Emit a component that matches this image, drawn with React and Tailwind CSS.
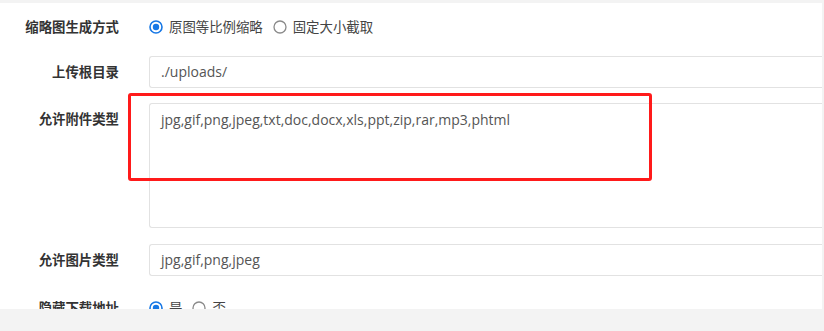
import React from "react";

const font = { fontFamily: '"Open Sans", "Noto Sans CJK SC", sans-serif' };

function Radio({ checked, label }) {
  return (
    <span className="flex items-center">
      {checked ? (
        <svg width="14" height="14" viewBox="0 0 14 14" className="mr-[6px]">
          <circle cx="7" cy="7" r="6" fill="none" stroke="#1677e5" strokeWidth="1.6" />
          <circle cx="7" cy="7" r="3.2" fill="#1677e5" />
        </svg>
      ) : (
        <svg width="14" height="14" viewBox="0 0 14 14" className="mr-[6px]">
          <circle cx="7" cy="7" r="6" fill="#fff" stroke="#8a8a8a" strokeWidth="1.3" />
        </svg>
      )}
      <span className="text-[13.4px] text-[#444] mr-[10px]">{label}</span>
    </span>
  );
}

function Label({ children, className = "" }) {
  return (
    <div className={"w-[120px] shrink-0 pr-[1px] text-right text-[13.4px] font-bold text-[#333] leading-[32px] " + className}>
      {children}
    </div>
  );
}

export default function App() {
  return (
    <div className="w-[824px] h-[331px] bg-[#f3f3f3] pt-[3px] overflow-hidden" style={font}>
      <div className="relative w-[822px] h-[306px] bg-white overflow-hidden">
        <div className="pt-[8px] pl-0">
          <div className="flex h-[32px] items-center">
            <Label>缩略图生成方式</Label>
            <div className="flex items-center pl-[29px]">
              <Radio checked label="原图等比例缩略" />
              <Radio label="固定大小截取" />
            </div>
          </div>

          <div className="flex mt-[13px]">
            <Label>上传根目录</Label>
            <div className="ml-[29px] flex-1 h-[32px] border border-r-0 border-[#e2e2e2] rounded-l-[3px] pl-[11px] text-[14px] text-[#555] leading-[30px]">
              ./uploads/
            </div>
          </div>

          <div className="flex mt-[15px]">
            <Label>允许附件类型</Label>
            <div className="ml-[29px] flex-1 h-[125px] border border-r-0 border-[#e2e2e2] rounded-l-[3px] pl-[11px] pt-[6px] text-[14px] text-[#555] leading-[20px]">
              jpg,gif,png,jpeg,txt,doc,docx,xls,ppt,zip,rar,mp3,phtml
            </div>
          </div>

          <div className="flex mt-[16px]">
            <Label>允许图片类型</Label>
            <div className="ml-[29px] flex-1 h-[32px] border border-r-0 border-[#e2e2e2] rounded-l-[3px] pl-[11px] text-[14px] text-[#555] leading-[30px]">
              jpg,gif,png,jpeg
            </div>
          </div>

          <div className="flex h-[32px] items-center mt-[16px]">
            <Label>隐藏下载地址</Label>
            <div className="flex items-center pl-[29px]">
              <Radio checked label="是" />
              <Radio label="否" />
            </div>
          </div>
        </div>

        <div className="absolute left-[128px] top-[90px] w-[524px] h-[88px] border-[3px] border-[#ff1a1a] rounded-[3px]" />
      </div>
    </div>
  );
}
